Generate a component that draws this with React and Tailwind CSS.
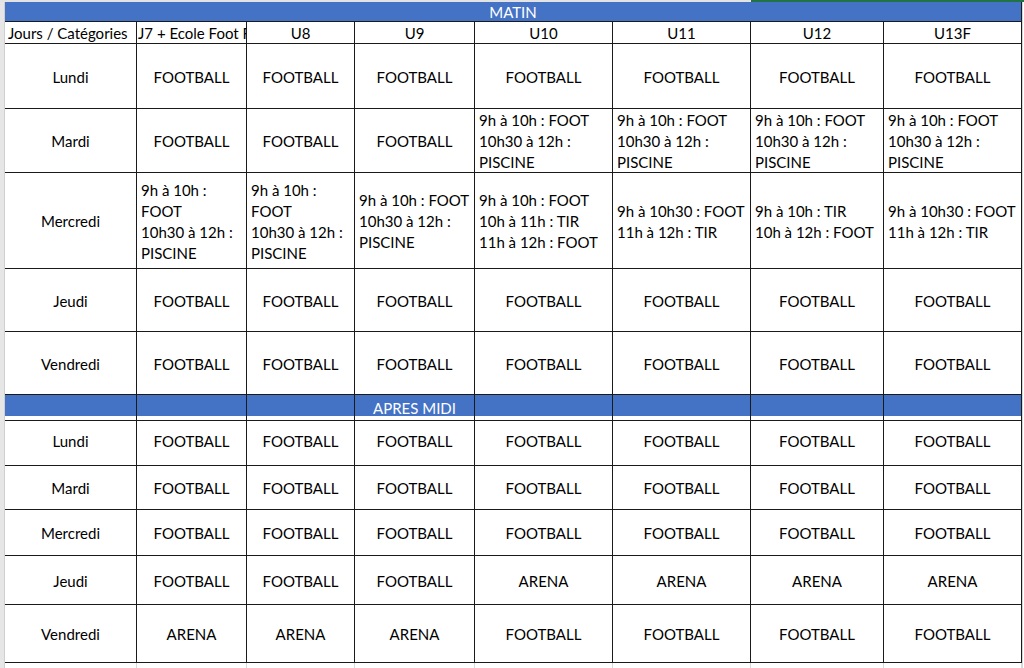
import React from 'react';

const cols = 'grid grid-cols-[132px_110px_108px_120px_138px_138px_133px_138px]';
const cell = 'border-r border-b border-[#1a1a1a] flex items-center overflow-hidden pt-[2px]';

const headers = ['Jours / Catégories', 'J7 + Ecole Foot F', 'U8', 'U9', 'U10', 'U11', 'U12', 'U13F'];

const F = 'FOOTBALL';
const A = 'ARENA';

// matin : chaque case est soit un texte simple (centré), soit une liste de lignes (alignée à gauche)
const matin = [
  { day: 'Lundi', h: 'h-[65px]', cells: [F, F, F, F, F, F, F] },
  {
    day: 'Mardi',
    h: 'h-[64px]',
    cells: [
      F,
      F,
      F,
      ['9h à 10h : FOOT', '10h30 à 12h :', 'PISCINE'],
      ['9h à 10h : FOOT', '10h30 à 12h :', 'PISCINE'],
      ['9h à 10h : FOOT', '10h30 à 12h :', 'PISCINE'],
      ['9h à 10h : FOOT', '10h30 à 12h :', 'PISCINE'],
    ],
  },
  {
    day: 'Mercredi',
    h: 'h-[96px]',
    cells: [
      ['9h à 10h :', 'FOOT', '10h30 à 12h :', 'PISCINE'],
      ['9h à 10h :', 'FOOT', '10h30 à 12h :', 'PISCINE'],
      ['9h à 10h : FOOT', '10h30 à 12h :', 'PISCINE'],
      ['9h à 10h : FOOT', '10h à 11h : TIR', '11h à 12h : FOOT'],
      ['9h à 10h30 : FOOT', '11h à 12h : TIR'],
      ['9h à 10h : TIR', '10h à 12h : FOOT'],
      ['9h à 10h30 : FOOT', '11h à 12h : TIR'],
    ],
  },
  { day: 'Jeudi', h: 'h-[63px]', cells: [F, F, F, F, F, F, F] },
  { day: 'Vendredi', h: 'h-[63px]', cells: [F, F, F, F, F, F, F] },
];

const apresMidi = [
  { day: 'Lundi', h: 'h-[50px]', cells: [F, F, F, F, F, F, F] },
  { day: 'Mardi', h: 'h-[44px]', cells: [F, F, F, F, F, F, F] },
  { day: 'Mercredi', h: 'h-[46px]', cells: [F, F, F, F, F, F, F] },
  { day: 'Jeudi', h: 'h-[49px]', cells: [F, F, F, A, A, A, A] },
  { day: 'Vendredi', h: 'h-[58px]', cells: [A, A, A, F, F, F, F] },
];

const Cell = ({ value }) => {
  if (Array.isArray(value)) {
    return (
      <div className={`${cell} justify-start pl-[4px]`}>
        <div className="leading-[21px] whitespace-nowrap">
          {value.map((line, i) => (
            <div key={i}>{line}</div>
          ))}
        </div>
      </div>
    );
  }
  return <div className={`${cell} justify-center whitespace-nowrap`}>{value}</div>;
};

const DayRow = ({ row }) => (
  <div className={`${cols} ${row.h}`}>
    <div className={`${cell} justify-center`}>{row.day}</div>
    {row.cells.map((c, i) => (
      <Cell key={i} value={c} />
    ))}
  </div>
);

export default function App() {
  return (
    <div
      className="w-[1024px] h-[668px] overflow-hidden bg-white text-[15px] text-black"
      style={{ fontFamily: 'Lato, "Liberation Sans", sans-serif' }}
    >
      {/* bandeau d'en-têtes de colonnes Excel, coupé */}
      <div className="flex h-[2px]">
        <div className="w-[751px] bg-[#e3e3e3]" />
        <div className="flex-1 bg-[#217346]" />
      </div>

      <div className="flex">
        <div className="w-[5px] bg-[#e6e6e6] border-r border-[#cfcfcf] shrink-0" />

        <div className="w-[1017px] shrink-0">
          {/* MATIN */}
          <div className="h-[20px] bg-[#4472c4] border-b border-r border-[#1a1a1a] flex items-center justify-center text-white pt-[1px]">
            MATIN
          </div>

          <div className={`${cols} h-[22px]`}>
            {headers.map((h, i) => (
              <div
                key={h}
                className={`${cell} ${i === 0 ? 'justify-start pl-[3px]' : i === 1 ? 'justify-start pl-[1px]' : 'justify-center'} whitespace-nowrap`}
              >
                {h}
              </div>
            ))}
          </div>

          {matin.map((row) => (
            <DayRow key={row.day} row={row} />
          ))}

          {/* APRES MIDI */}
          <div className={`${cols} h-[21px] bg-[#4472c4] text-white`}>
            <div className={cell} />
            <div className={cell} />
            <div className={cell} />
            <div className={`${cell} justify-center overflow-visible whitespace-nowrap`}>APRES MIDI</div>
            <div className={cell} />
            <div className={cell} />
            <div className={cell} />
            <div className={cell} />
          </div>

          {apresMidi.map((row) => (
            <DayRow key={row.day} row={row} />
          ))}

          {/* lignes de quadrillage vides sous le tableau */}
          <div className={`${cols} h-[5px]`}>
            {headers.map((h) => (
              <div key={h} className="border-r border-[#d9d9d9]" />
            ))}
          </div>
        </div>

        <div className="flex-1 bg-white border-l border-[#d9d9d9]" />
      </div>
    </div>
  );
}
